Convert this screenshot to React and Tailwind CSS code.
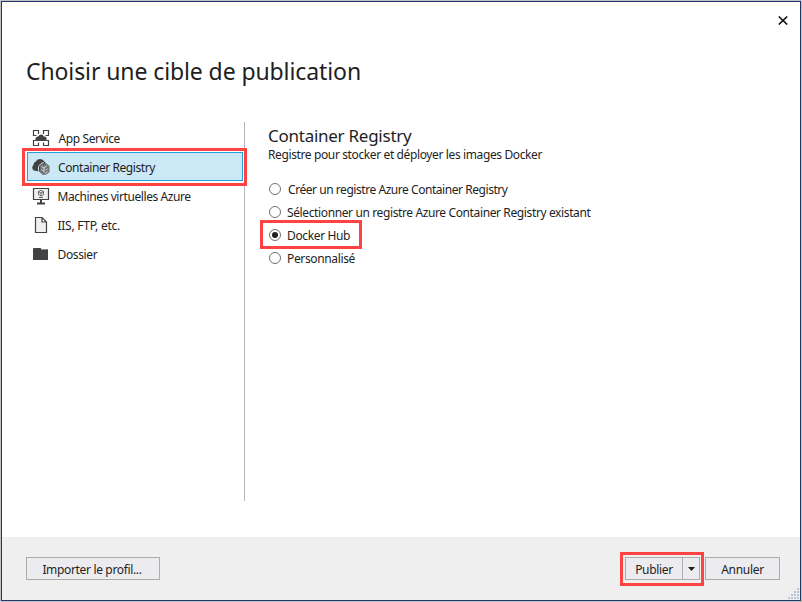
import React from "react";

const rows = [
  { label: "App Service", icon: AppIcon, text: "tracking-[-0.38px] ml-[8.5px]" },
  { label: "Container Registry", icon: RegistryIcon, selected: true, text: "tracking-[-0.42px] ml-[8px]" },
  { label: "Machines virtuelles Azure", icon: MachineIcon, text: "tracking-[-0.42px] ml-[7.5px]" },
  { label: "IIS, FTP, etc.", icon: PageIcon, text: "tracking-[-0.26px] ml-[7.5px]" },
  { label: "Dossier", icon: FolderIcon, text: "tracking-[-0.35px] ml-[7.5px]" },
];

const options = [
  { label: "Créer un registre Azure Container Registry", text: "tracking-[-0.45px] ml-[7px]" },
  { label: "Sélectionner un registre Azure Container Registry existant", text: "tracking-[-0.38px] ml-[6px]" },
  { label: "Docker Hub", checked: true, text: "tracking-[-0.36px] ml-[6px]" },
  { label: "Personnalisé", text: "tracking-[-0.36px] ml-[6px]" },
];

function AppIcon() {
  return (
    <svg width="18" height="18" viewBox="0 0 18 18" fill="none" stroke="#424242">
      <path d="M4.500 6.500H1.500V1.500H6.500V5M11.500 5V1.500H16.500V6.500H13.500M4.500 11.500H1.500V16.500H6.500V13.500M11.500 13.500V16.500H16.500V11.500H13.500" strokeWidth="1.200" />
      <path d="M5 12a2 2 0 0 1-.2-3.900 2.200 2.200 0 0 1 1.700-.8 2.900 2.900 0 0 1 5.400.2A2.300 2.300 0 0 1 13 12Z" fill="#424242" stroke="none" />
    </svg>
  );
}

function RegistryIcon() {
  return (
    <svg width="18" height="18" viewBox="0 0 18 18">
      <path d="M3 12.800A3.300 3.300 0 0 1 1.500 7a3.700 3.700 0 0 1 2.300-3.600A5 5 0 0 1 12.500 3.500l2 3-5 7.500Z" fill="#424242" />
      <path d="M8 7.500 10 5.500 12 6.500 14 5 17.500 8V14L14.500 16.500 11 17 8 14.500Z" fill="#707477" />
      <path d="M6.500 13.500V8.500L9 5.500 12 4.500M9.500 8.500 12 10V14.500M12 10l3-2.500M9.500 11.500l2 1.300M13.500 12l2-1.200M13 15.500l2.500-2" fill="none" stroke="#dceaf1" strokeWidth=".9" />
    </svg>
  );
}

function MachineIcon() {
  return (
    <svg width="18" height="18" viewBox="0 0 18 18" fill="none" stroke="#424242">
      <path d="M1.500 1.500H16.500V12.500H1.500Z" fill="#f0eff1" strokeWidth="1.200" />
      <path d="M9 3.300 11.500 4.600V7.600L9 9 6.500 7.600V4.600ZM6.500 4.600 9 6l2.500-1.400M9 6v3M7 10.500h4" strokeWidth=".8" />
      <path d="M9 12v4M5 16.500h8" strokeWidth="2" />
    </svg>
  );
}

function PageIcon() {
  return (
    <svg width="18" height="18" viewBox="0 0 18 18" fill="#f0eff1" stroke="#424242" strokeWidth="1.200">
      <path d="M3.500 1.500H10L14.500 6V16.500H3.500ZM10 1.500V6H14.500" />
    </svg>
  );
}

function FolderIcon() {
  return (
    <svg width="18" height="18" viewBox="0 0 18 18">
      <path d="M1 4Q1 3 2 3H8.500L9.500 4H15Q16 4 16 5V15H1Z" fill="#424242" />
      <path d="M9 4.500H15" stroke="#8a8c8e" />
    </svg>
  );
}

function Radio({ checked }) {
  return (
    <span className="flex size-[12px] shrink-0 items-center justify-center rounded-full border border-[#707070] bg-white">
      {checked && <span className="size-[6px] rounded-full bg-[#212121]" />}
    </span>
  );
}

export default function App() {
  return (
    <div className="h-[602px] w-[802px] overflow-hidden bg-[#c0c0c0] p-px font-['Noto_Sans','Open_Sans',sans-serif] text-[12px] leading-4 text-[#1e1e1e]">
      <div className="flex h-full flex-col border border-[#1f3870] bg-white">
        <header className="flex h-[120px] shrink-0 flex-col">
          <div className="flex h-9 items-end justify-end pr-[12px] pb-[13px]">
            <svg width="10" height="9" viewBox="0 0 10 9" stroke="#111" strokeWidth="1.600"><path d="M.8.5 9.200 8.500M9.200.5.8 8.500" /></svg>
          </div>
          <h1 className="mt-[17px] ml-6 text-[23px] leading-8 tracking-[-0.1px] whitespace-nowrap">Choisir une cible de publication</h1>
        </header>

        <main className="flex h-[415px] shrink-0">
          <nav className="ml-[25px] w-[217px] shrink-0 pt-px">
            {rows.map(({ label, icon: Icon, selected, text }) => (
              <div key={label} className={`relative flex h-[29px] items-center ${selected ? "w-[216px] border border-[#26a0da] bg-[#cbe8f6] pl-[4px]" : "pl-[5px]"}`}>
                <Icon />
                <span className={`mt-[2px] whitespace-nowrap ${text}`}>{label}</span>
                {selected && <span className="pointer-events-none absolute -top-[5px] -left-[6px] h-[38px] w-[225px] border-[3px] border-[#ff4343]" />}
              </div>
            ))}
          </nav>
          <div className="h-[379px] w-px bg-[#b0b7c1]" />
          <section className="ml-[23px]">
            <h2 className="mt-[3px] text-[17px] leading-[22px] tracking-[-0.26px] whitespace-nowrap">Container Registry</h2>
            <p className="tracking-[-0.38px] whitespace-nowrap">Registre pour stocker et déployer les images Docker</p>
            <div className="mt-[14px] pl-px">
              {options.map(({ label, checked, text }) => (
                <div key={label} className="relative flex h-[23px] items-center">
                  <Radio checked={checked} />
                  <span className={`mt-[2px] whitespace-nowrap ${text}`}>{label}</span>
                  {checked && <span className="pointer-events-none absolute -top-[3px] -left-[9px] h-[29px] w-[102px] border-[3px] border-[#ff4343]" />}
                </div>
              ))}
            </div>
          </section>
        </main>

        <footer className="relative flex flex-1 items-start bg-[#efeff0] pt-5 pl-6">
          <button className="h-[23px] w-[134px] border border-[#acacac] bg-[#ececf0] pt-[2px] pr-[2px] tracking-[-0.34px]">Importer le profil...</button>
          <div className="relative ml-[465px] flex h-[23px] w-[75px] border border-[#acacac] bg-[#ececf0]">
            <button className="w-[57px] border-r border-[#acacac] pt-[2px] tracking-[-0.32px]">Publier</button>
            <button className="flex flex-1 items-center justify-center"><svg width="7" height="4" viewBox="0 0 7 4"><path d="M0 0H7L3.500 4Z" fill="#1e1e1e" /></svg></button>
            <span className="pointer-events-none absolute -top-[6px] -left-[6px] h-[34px] w-[84px] border-[3px] border-[#ff4343]" />
          </div>
          <button className="ml-[5px] h-[23px] w-[75px] border border-[#acacac] bg-[#ececf0] pt-[2px] tracking-[-0.3px]">Annuler</button>
          <svg className="absolute right-0 bottom-0" width="13" height="13" viewBox="0 0 13 13" fill="#b8c4d8">
            <path d="M10 1h2v2h-2zM7 4h2v2h-2zM10 4h2v2h-2zM4 7h2v2h-2zM7 7h2v2h-2zM10 7h2v2h-2zM1 10h2v2h-2zM4 10h2v2h-2zM7 10h2v2h-2zM10 10h2v2h-2z" />
          </svg>
        </footer>
      </div>
    </div>
  );
}
